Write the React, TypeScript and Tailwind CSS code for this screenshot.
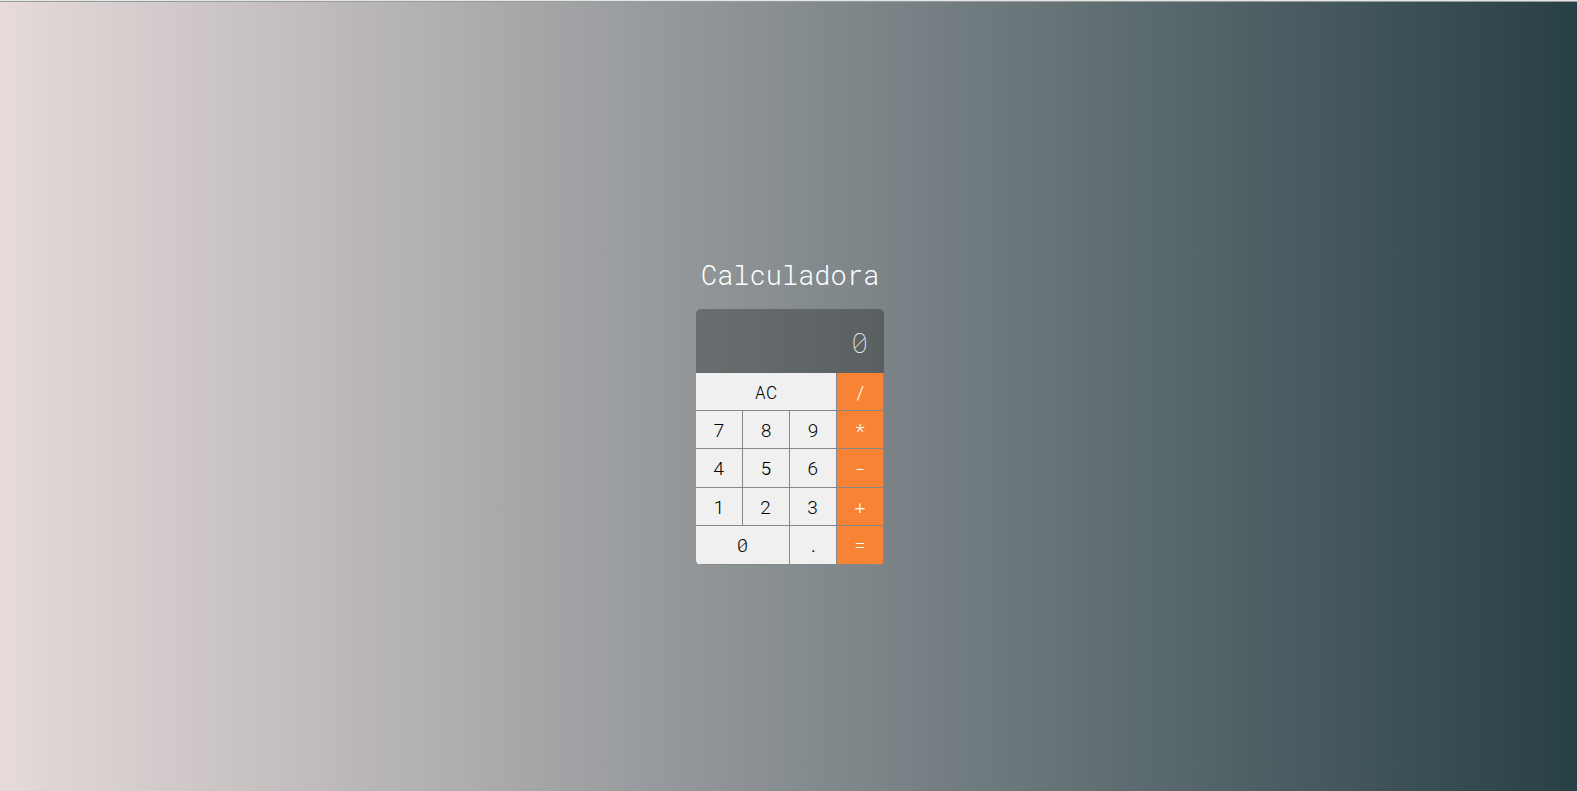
import { useState } from "react";
import clsx from "clsx";

type Key = { label: string; wide?: "double" | "triple"; operator?: boolean };

const KEYS: Key[] = [
  { label: "AC", wide: "triple" },
  { label: "/", operator: true },
  { label: "7" },
  { label: "8" },
  { label: "9" },
  { label: "*", operator: true },
  { label: "4" },
  { label: "5" },
  { label: "6" },
  { label: "-", operator: true },
  { label: "1" },
  { label: "2" },
  { label: "3" },
  { label: "+", operator: true },
  { label: "0", wide: "double" },
  { label: "." },
  { label: "=", operator: true },
];

function compute(a: number, b: number, operation: string) {
  if (operation === "+") return a + b;
  if (operation === "-") return a - b;
  if (operation === "*") return a * b;
  return a / b;
}

export default function App() {
  const [display, setDisplay] = useState("0");
  const [stored, setStored] = useState(0);
  const [operation, setOperation] = useState<string | null>(null);
  const [fresh, setFresh] = useState(true);

  function press({ label, operator }: Key) {
    if (label === "AC") {
      setDisplay("0");
      setStored(0);
      setOperation(null);
      setFresh(true);
    } else if (operator) {
      const current = parseFloat(display);
      const result = operation ? compute(stored, current, operation) : current;
      setStored(result);
      setDisplay(String(result));
      setOperation(label === "=" ? null : label);
      setFresh(true);
    } else {
      const base = fresh ? (label === "." ? "0" : "") : display;
      if (label === "." && base.includes(".")) return;
      setDisplay(base + label);
      setFresh(false);
    }
  }

  return (
    <div className="flex min-h-screen flex-col bg-linear-to-r/srgb from-[#e6dada] to-[#274046] font-['Roboto_Mono','Liberation_Mono',monospace] text-white">
      <div className="h-[2px] border-b border-[#999c9c] bg-[#e3e6e4]" />
      <main className="flex flex-1 flex-col items-center justify-center pl-[3px]">
        <h1 className="mt-7 mb-4 text-[27px] leading-9 font-light">
          Calculadora
        </h1>
        <div className="flex h-64 w-[188px] flex-col overflow-hidden rounded-[5px]">
          <output className="flex h-16 items-center justify-end overflow-hidden bg-black/27 px-4 pt-1 text-[28px] font-thin">
            {display}
          </output>
          <div className="grid flex-1 grid-cols-4 grid-rows-5">
            {KEYS.map((key) => (
              <button
                key={key.label}
                type="button"
                onClick={() => press(key)}
                className={clsx(
                  "border-r border-b border-[#888] text-[19px] leading-none font-light outline-none",
                  key.wide === "double" && "col-span-2",
                  key.wide === "triple" && "col-span-3",
                  key.operator
                    ? "bg-[#f88334] text-white active:bg-[#d96d25]"
                    : "bg-[#f0f0f0] text-black active:bg-[#ccc]",
                )}
              >
                {key.label}
              </button>
            ))}
          </div>
        </div>
      </main>
    </div>
  );
}
